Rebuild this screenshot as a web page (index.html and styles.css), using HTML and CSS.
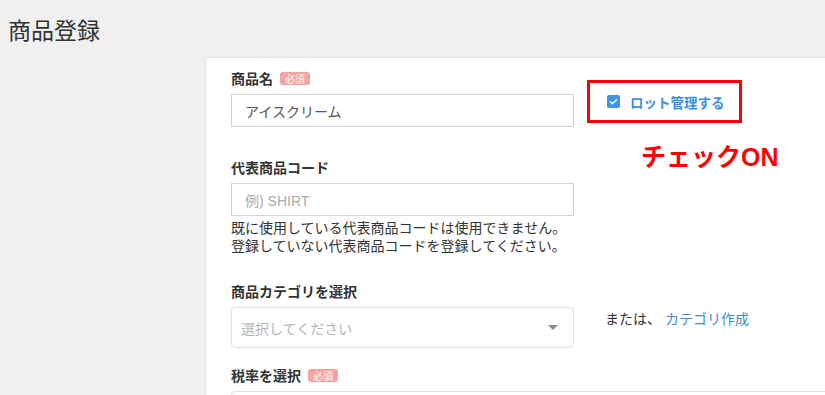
FILE: index.html
```html
<!DOCTYPE html>
<html lang="ja">
<head>
    <meta charset="UTF-8">
    <meta name="viewport" content="width=device-width, initial-scale=1.0">
    <title>商品登録</title>
    <link rel="stylesheet" href="styles.css">
</head>
<body>

<h1 class="page-title">商品登録</h1>

<div class="card">

    <div class="row">
        <div class="field">
            <label class="field-label">商品名 <span class="badge">必須</span></label>
            <input type="text" class="text-input" value="アイスクリーム">
        </div>
        <div class="side side-lot">
            <label class="lot-check">
                <span class="checkbox">
                    <svg width="9" height="7" viewBox="0 0 9 7"><path d="M1 3.6 L3.4 5.8 L8 1.2" fill="none" stroke="#fff" stroke-width="1.4"/></svg>
                </span>
                ロット管理する
            </label>
            <span class="note">チェックON</span>
        </div>
    </div>

    <div class="row row-code">
        <div class="field">
            <label class="field-label">代表商品コード</label>
            <input type="text" class="text-input" placeholder="例) SHIRT">
            <p class="help">既に使用している代表商品コードは使用できません。</p>
            <p class="help">登録していない代表商品コードを登録してください。</p>
        </div>
    </div>

    <div class="row row-category">
        <div class="field">
            <label class="field-label">商品カテゴリを選択</label>
            <div class="select">
                <span class="select-placeholder">選択してください</span>
                <span class="select-arrow"></span>
            </div>
        </div>
        <div class="side side-or">
            <span>または、</span>
            <a href="#" class="link">カテゴリ作成</a>
        </div>
    </div>

    <div class="row row-tax">
        <div class="field field-wide">
            <label class="field-label">税率を選択 <span class="badge">必須</span></label>
            <div class="select select-wide"></div>
        </div>
    </div>

</div>

</body>
</html>
```

FILE: styles.css
```css
body {
    font-family: "Liberation Sans", "Noto Sans CJK JP", sans-serif;
    margin: 0;
    padding: 0;
    background-color: #f0f0f0;
    color: #333;
    overflow: hidden;
}
.page-title {
    font-family: "Noto Sans CJK JP", sans-serif;
    font-size: 23px;
    font-weight: normal;
    color: #333;
    margin: 0;
    padding: 12px 8px 0;
    height: 46px;
    box-sizing: border-box;
}
.card {
    margin-left: 206px;
    width: 700px;
    background-color: white;
    border-radius: 4px 0 0 0;
    box-shadow: 0 0 3px rgba(0, 0, 0, 0.12);
    padding: 10px 0 0 25px;
    margin-top: 12px;
    height: 400px;
}
.row {
    display: flex;
    gap: 13px;
}
.field {
    width: 343px;
    display: flex;
    flex-direction: column;
}
.field-wide {
    width: 620px;
}
.field-label {
    font-family: "Noto Sans CJK JP", sans-serif;
    font-size: 14px;
    font-weight: bold;
    line-height: 20px;
    margin-bottom: 6px;
    display: flex;
    align-items: center;
    gap: 6px;
}
.badge {
    font-size: 10px;
    font-weight: normal;
    line-height: 13px;
    color: #fff;
    background-color: #f5a3a3;
    border-radius: 3px;
    padding: 0 5px;
    margin-left: 1px;
}
.text-input {
    box-sizing: border-box;
    width: 343px;
    height: 33px;
    border: 1px solid #cfd2d8;
    padding: 0 13px;
    font-family: "Noto Sans CJK JP", sans-serif;
    font-size: 14px;
    color: #555;
    outline: none;
}
.text-input::placeholder {
    font-family: "Liberation Sans", "Noto Sans CJK JP", sans-serif;
    color: #aaa;
}
.side-lot {
    position: relative;
    padding-top: 12px;
}
.lot-check {
    box-sizing: border-box;
    display: flex;
    align-items: center;
    gap: 10px;
    width: 155px;
    height: 43px;
    border: 3px solid #f00;
    padding-left: 17px;
    font-family: "Noto Sans CJK JP", sans-serif;
    font-size: 13.5px;
    font-weight: bold;
    color: #3a8fe6;
}
.checkbox {
    width: 13px;
    height: 13px;
    border-radius: 2px;
    background-color: #3b94ea;
    display: flex;
    align-items: center;
    justify-content: center;
}
.note {
    position: absolute;
    left: 54px;
    top: 74px;
    font-family: "Liberation Sans", "Noto Sans CJK JP", sans-serif;
    font-size: 25px;
    line-height: 30px;
    font-weight: bold;
    color: #f00;
    white-space: nowrap;
}
.row-code {
    margin-top: 30px;
}
.help {
    margin: 0;
    font-family: "Noto Sans CJK JP", sans-serif;
    font-size: 14px;
    line-height: 18px;
    color: #333;
}
.text-input + .help {
    margin-top: 2px;
}
.row-category {
    margin-top: 27px;
}
.select {
    box-sizing: border-box;
    width: 343px;
    height: 41px;
    border: 1px solid #e2e2e2;
    border-radius: 4px;
    display: flex;
    align-items: center;
    justify-content: space-between;
    padding: 0 15px 0 9px;
}
.select-wide {
    width: 620px;
    border-radius: 4px 0 0 0;
}
.select-placeholder {
    font-family: "Noto Sans CJK JP", sans-serif;
    font-size: 14px;
    color: #b5b5b5;
}
.select-arrow {
    width: 0;
    height: 0;
    border-left: 5px solid transparent;
    border-right: 5px solid transparent;
    border-top: 5px solid #8a8a8a;
}
.side-or {
    display: flex;
    align-items: center;
    gap: 4px;
    padding-top: 16px;
    padding-left: 18px;
    font-family: "Noto Sans CJK JP", sans-serif;
    font-size: 14px;
    height: 41px;
}
.link {
    color: #3a8ecf;
    text-decoration: none;
}
.row-tax {
    margin-top: 17px;
}
```
